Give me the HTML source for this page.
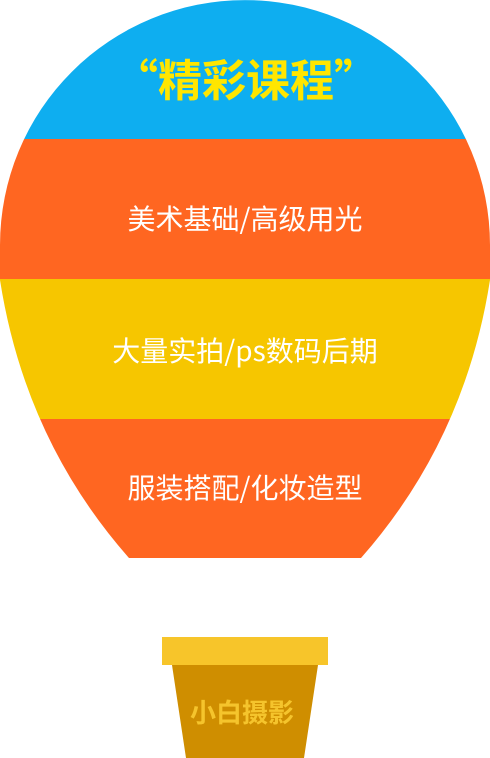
<!DOCTYPE html>
<html><head><meta charset="utf-8"><style>
html,body{margin:0;padding:0;background:#fff;}
svg{display:block;}
text{font-family:"Noto Sans CJK SC","WenQuanYi Zen Hei",sans-serif;}
</style></head><body>
<svg width="490" height="758" viewBox="0 0 490 758" xmlns="http://www.w3.org/2000/svg">
<defs><clipPath id="b"><path d="M129,558 L361,558 Q465,440 490,280 L490,245 A245,245 0 0 0 0,245 L0,280 Q25,440 129,558 Z"/></clipPath></defs>
<g clip-path="url(#b)">
<rect x="0" y="0" width="490" height="139" fill="#0eaef0"/>
<rect x="0" y="139" width="490" height="140" fill="#ff6621"/>
<rect x="0" y="279" width="490" height="140" fill="#f6c600"/>
<rect x="0" y="419" width="490" height="139" fill="#ff6621"/>
</g>
<text x="246" y="96" text-anchor="middle" font-size="44" font-weight="bold" fill="#ffe600">“精彩课程”</text>
<text x="245" y="229" text-anchor="middle" font-size="28" fill="#fff">美术基础/高级用光</text>
<text x="245" y="361" text-anchor="middle" font-size="28" fill="#fff">大量实拍/ps数码后期</text>
<text x="245" y="498" text-anchor="middle" font-size="28" fill="#fff">服装搭配/化妆造型</text>
<rect x="162" y="637" width="166" height="28" fill="#f7c52a"/>
<path d="M172,665 L318,665 L304,758 L186,758 Z" fill="#cf8e00"/>
<text x="242" y="722" text-anchor="middle" font-size="26" font-weight="bold" fill="#f5c42c">小白摄影</text>
</svg>
</body></html>
